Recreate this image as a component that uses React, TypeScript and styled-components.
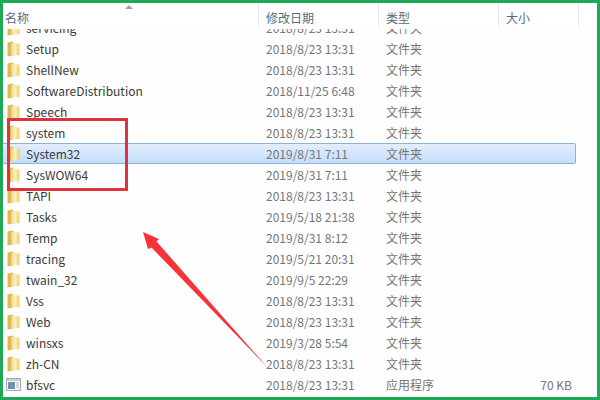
import styled, { createGlobalStyle } from 'styled-components';

const files = [
  { name: 'servicing', date: '2018/8/23 13:31', type: '文件夹' },
  { name: 'Setup', date: '2018/8/23 13:31', type: '文件夹' },
  { name: 'ShellNew', date: '2018/8/23 13:31', type: '文件夹' },
  { name: 'SoftwareDistribution', date: '2018/11/25 6:48', type: '文件夹' },
  { name: 'Speech', date: '2018/8/23 13:31', type: '文件夹' },
  { name: 'system', date: '2018/8/23 13:31', type: '文件夹' },
  { name: 'System32', date: '2019/8/31 7:11', type: '文件夹', selected: true },
  { name: 'SysWOW64', date: '2019/8/31 7:11', type: '文件夹' },
  { name: 'TAPI', date: '2018/8/23 13:31', type: '文件夹' },
  { name: 'Tasks', date: '2019/5/18 21:38', type: '文件夹' },
  { name: 'Temp', date: '2019/8/31 8:12', type: '文件夹' },
  { name: 'tracing', date: '2019/5/21 20:31', type: '文件夹' },
  { name: 'twain_32', date: '2019/9/5 22:29', type: '文件夹' },
  { name: 'Vss', date: '2018/8/23 13:31', type: '文件夹' },
  { name: 'Web', date: '2018/8/23 13:31', type: '文件夹' },
  { name: 'winsxs', date: '2019/3/28 5:54', type: '文件夹' },
  { name: 'zh-CN', date: '2018/8/23 13:31', type: '文件夹' },
  { name: 'bfsvc', date: '2018/8/23 13:31', type: '应用程序', size: '70 KB', app: true },
];

const FolderIcon = () => (
  <svg width="13" height="16" viewBox="0 0 13 16">
    <defs>
      <linearGradient id="folderFill" x1="0" y1="0" x2="1" y2="0">
        <stop offset="0" stopColor="#ecd27a" />
        <stop offset="0.45" stopColor="#fbf0c4" />
        <stop offset="1" stopColor="#ecd06c" />
      </linearGradient>
    </defs>
    <path d="M0.5 1.5 L6 0.5 L6 14.5 L0.5 15.5 Z" fill="#dcb94f" />
    <path d="M4 2 Q8.5 1 12.5 3 L12.5 14.5 Q8.5 13 4 15.5 Z" fill="url(#folderFill)" />
  </svg>
);

const AppIcon = () => (
  <svg width="15" height="13" viewBox="0 0 15 13">
    <rect x="0.5" y="0.5" width="14" height="12" fill="#f6f7f8" stroke="#a3acb4" />
    <rect x="1" y="1" width="13" height="2" fill="#c3d0dc" />
    <rect x="2" y="4" width="7" height="7" fill="#6f93ad" />
    <path d="M10 5 H13 M10 7 H13 M10 9 H13" stroke="#b4bac0" />
  </svg>
);

export default function App() {
  return (
    <>
      <GlobalStyle />
      <Frame>
        <Header>
          <HeaderCell>
            名称
            <SortCaret />
          </HeaderCell>
          <HeaderCell>修改日期</HeaderCell>
          <HeaderCell>类型</HeaderCell>
          <HeaderCell>大小</HeaderCell>
          <HeaderCell />
        </Header>
        <List>
          {files.map((file) => (
            <Row key={file.name} $selected={file.selected}>
              <NameCell>
                <IconSlot>{file.app ? <AppIcon /> : <FolderIcon />}</IconSlot>
                {file.name}
              </NameCell>
              <InfoCell>{file.date}</InfoCell>
              <InfoCell>{file.type}</InfoCell>
              <SizeCell>{file.size}</SizeCell>
            </Row>
          ))}
        </List>
        <RedBox />
        <Arrow viewBox="0 0 150 150" width="150" height="150">
          <path d="M3 2 L19 9 L16.5 11.5 L128 138 L11.5 17.5 L8 19 Z" fill="#f7333a" />
        </Arrow>
      </Frame>
    </>
  );
}

const GlobalStyle = createGlobalStyle`
  html, body {
    margin: 0;
    padding: 0;
    background: #fff;
  }
  * {
    box-sizing: border-box;
  }
`;

const Frame = styled.div`
  position: relative;
  width: 600px;
  height: 400px;
  border: 3px solid #1fa855;
  background: #fefefe;
  overflow: hidden;
  font-family: "Noto Sans CJK SC", "Noto Sans", sans-serif;
  font-size: 12px;
`;

const Header = styled.div`
  display: grid;
  grid-template-columns: 256px 120px 120px 80px 1fr;
  height: 26px;
  padding-bottom: 5px;
  background: #fff;
`;

const HeaderCell = styled.div`
  position: relative;
  display: flex;
  align-items: center;
  padding: 6px 0 0 7px;
  color: #5a6a7a;
  border-right: 1px solid #e4e8ec;
  &:first-child {
    padding-left: 2px;
  }
  &:last-child {
    border-right: none;
  }
`;

const SortCaret = styled.span`
  position: absolute;
  left: 122px;
  top: 2px;
  width: 0;
  height: 0;
  border-left: 4px solid transparent;
  border-right: 4px solid transparent;
  border-bottom: 4px solid #9aa3ac;
`;

const List = styled.div`
  height: 368px;
  overflow: hidden;
  & > :first-child {
    margin-top: -12px;
  }
`;

const Row = styled.div<{ $selected?: boolean }>`
  display: grid;
  grid-template-columns: 256px 120px 120px 77px;
  align-items: center;
  height: 21px;
  width: 573px;
  border: 1px solid ${(p) => (p.$selected ? '#8fb2cf' : 'transparent')};
  border-width: 1px 1px 1px 0;
  border-radius: 0 2px 2px 0;
  background: ${(p) => (p.$selected ? 'linear-gradient(#e2eefc, #c4defc)' : 'transparent')};
`;

const NameCell = styled.div`
  display: flex;
  align-items: center;
  color: #3a3a3a;
  white-space: nowrap;
  padding-left: 3px;
`;

const IconSlot = styled.span`
  display: flex;
  align-items: center;
  justify-content: center;
  width: 15px;
  margin-right: 5px;
`;

const InfoCell = styled.div`
  color: #757575;
  padding-left: 7px;
  white-space: nowrap;
`;

const SizeCell = styled(InfoCell)`
  text-align: right;
  padding-right: 4px;
`;

const RedBox = styled.div`
  position: absolute;
  left: 4px;
  top: 115px;
  width: 121px;
  height: 73px;
  border: 3px solid #e0313f;
`;

const Arrow = styled.svg`
  position: absolute;
  left: 137px;
  top: 227px;
`;
